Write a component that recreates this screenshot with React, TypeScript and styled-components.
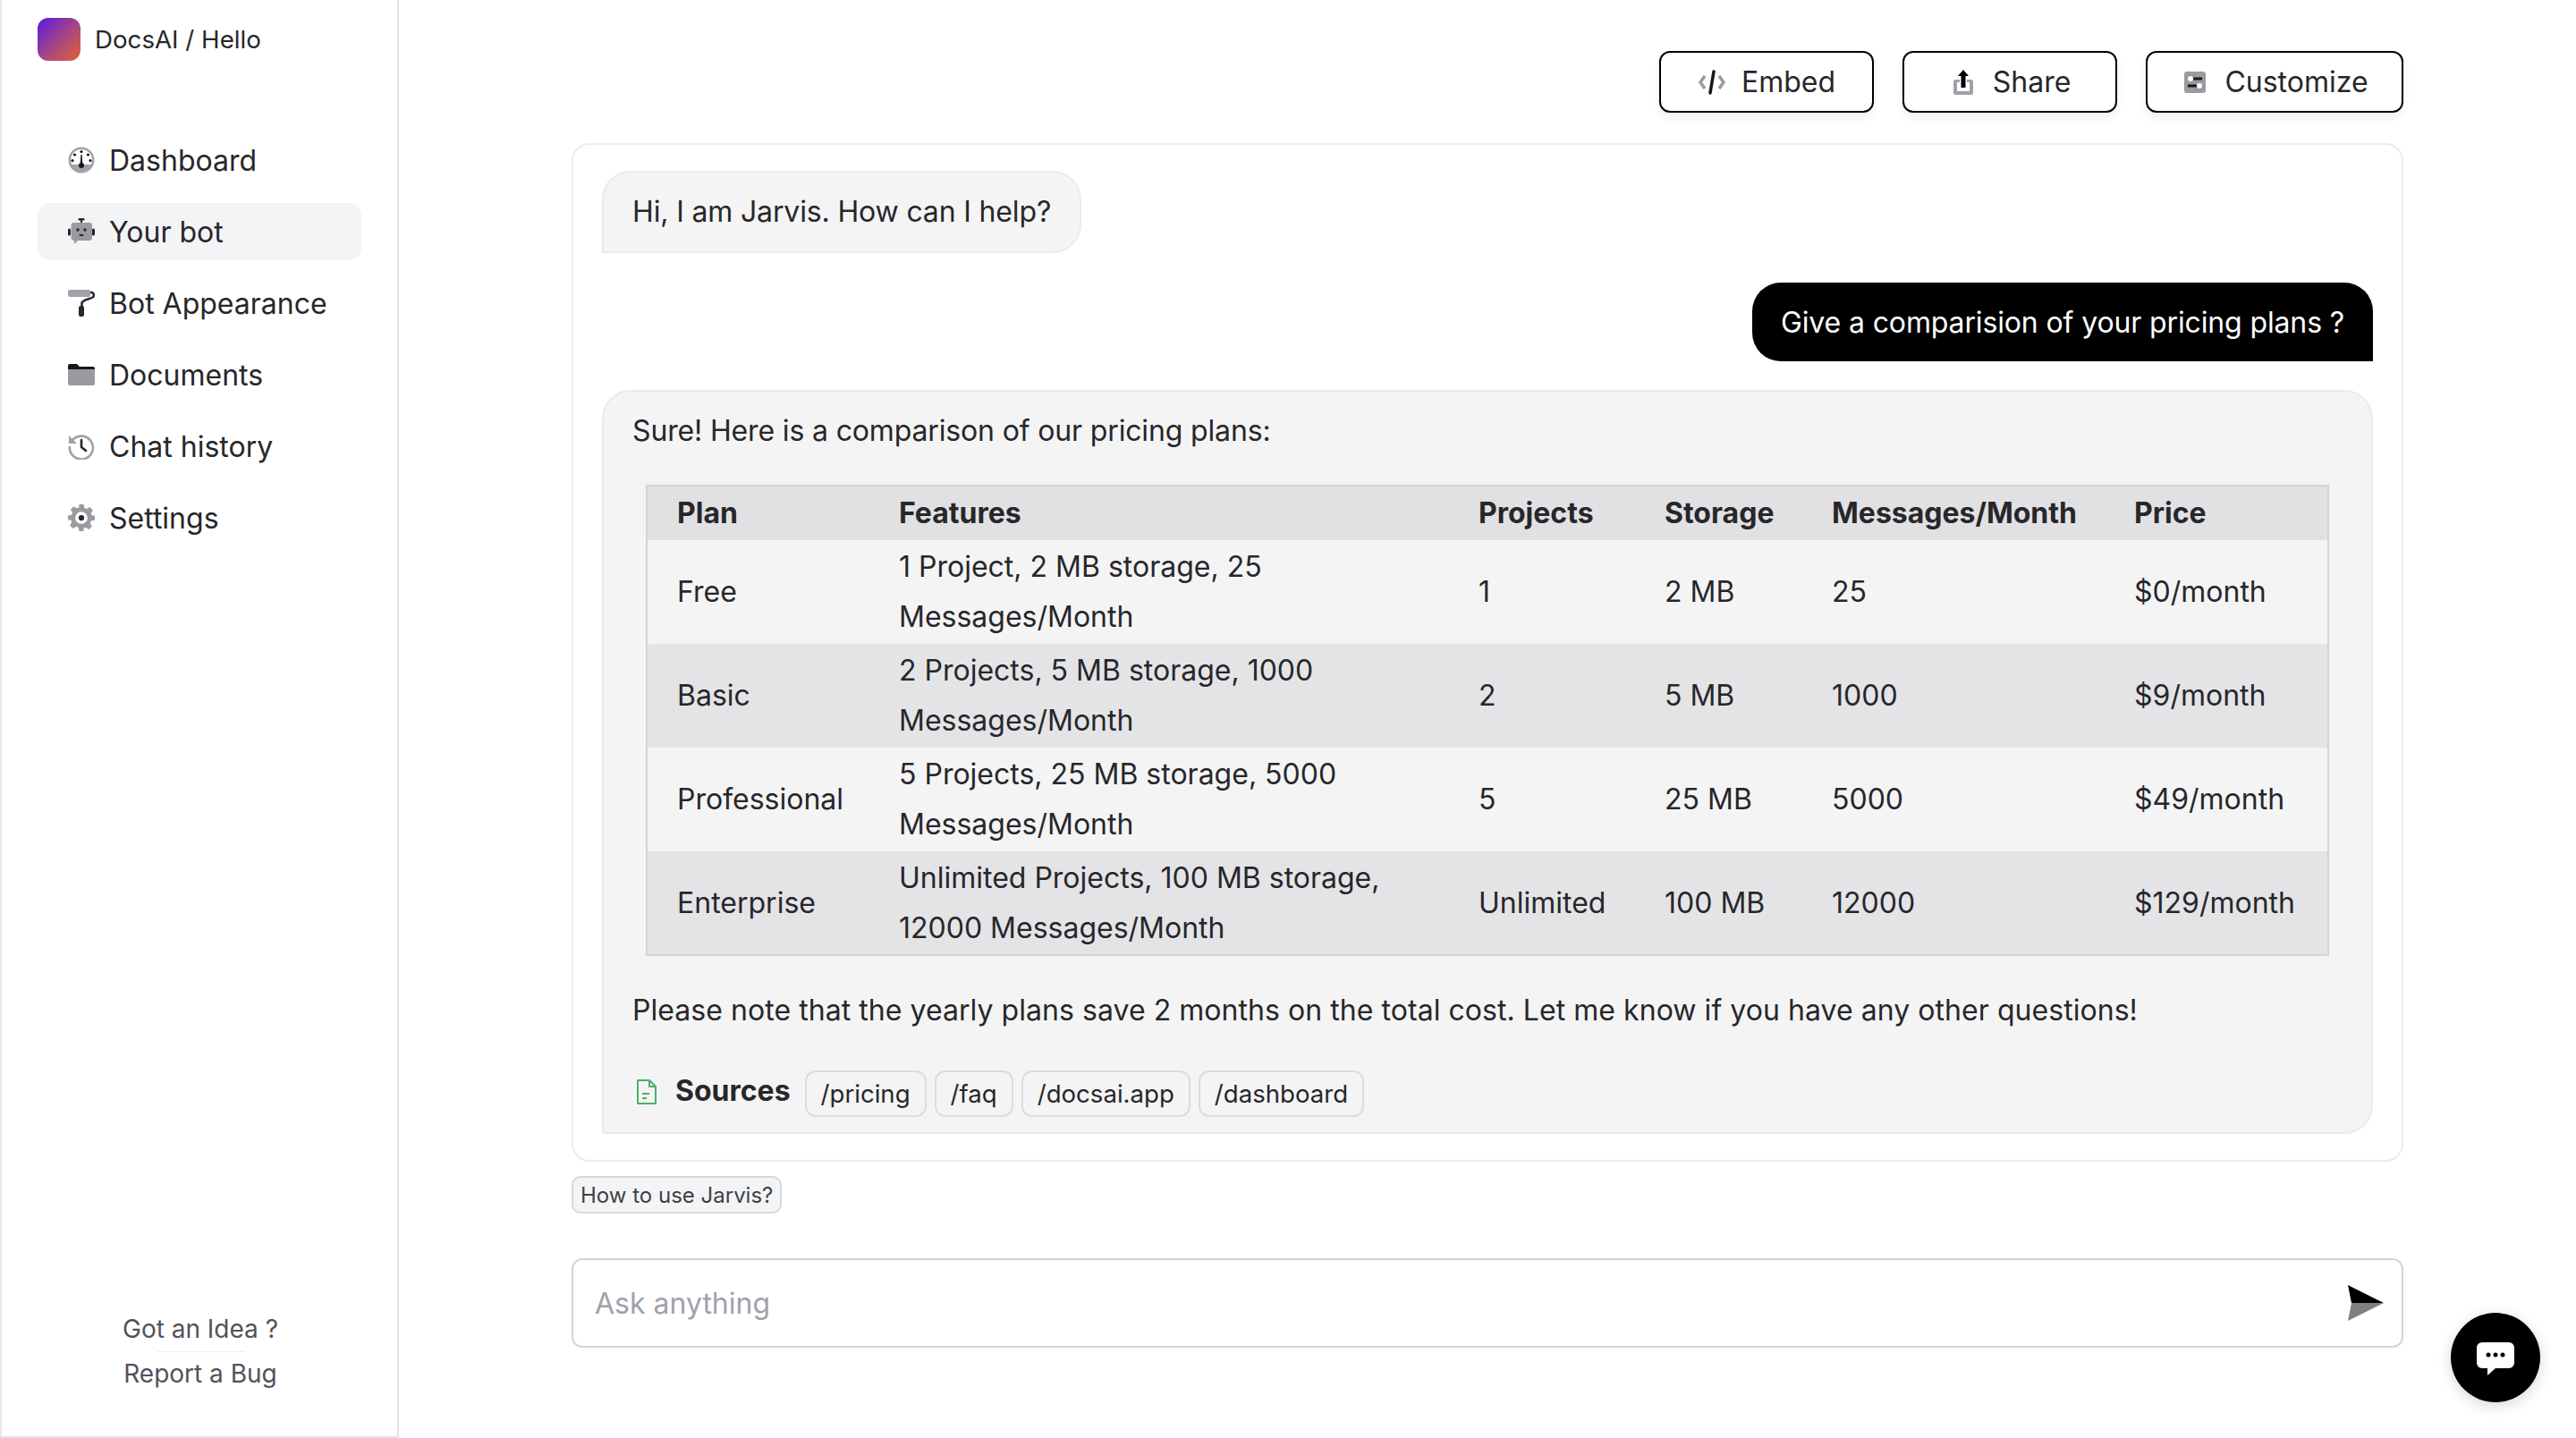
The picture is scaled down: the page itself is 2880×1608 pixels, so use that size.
// App.tsx
import React from 'react';
import styled, { createGlobalStyle } from 'styled-components';

const GlobalStyle = createGlobalStyle`
    html, body {
        margin: 0;
        padding: 0;
        background: #fff;
    }
    body {
        font-family: Inter, 'Liberation Sans', sans-serif;
        color: #27272a;
    }
    * {
        box-sizing: border-box;
    }
`;

const Page = styled.div`
    display: flex;
    width: 2880px;
    height: 1608px;
    position: relative;
    overflow: hidden;
`;

const Sidebar = styled.aside`
    width: 446px;
    height: 1608px;
    flex-shrink: 0;
    display: flex;
    flex-direction: column;
    border-left: 2px solid #e9e9ea;
    border-right: 2px solid #e4e4e7;
    border-bottom: 2px solid #e4e4e7;
    padding: 20px 40px 0;
`;

const Brand = styled.div`
    display: flex;
    align-items: center;
    gap: 16px;
    height: 48px;
    font-size: 27.7px;
    color: #27272a;
`;

const Logo = styled.div`
    width: 48px;
    height: 48px;
    border-radius: 12px;
    background: linear-gradient(135deg, #5a18e6 0%, #a9487f 55%, #e65f33 100%);
`;

const Nav = styled.nav`
    display: flex;
    flex-direction: column;
    gap: 16px;
    margin-top: 79px;
    width: 362px;
`;

const NavItem = styled.div<{ $active?: boolean }>`
    display: flex;
    align-items: center;
    gap: 16px;
    height: 64px;
    padding-left: 34px;
    border-radius: 14px;
    font-size: 32px;
    color: #27272a;
    background: ${(p) => (p.$active ? '#f3f4f6' : 'transparent')};
`;

const NavIcon = styled.svg`
    width: 30px;
    height: 30px;
    flex-shrink: 0;
`;

const SideFooter = styled.div`
    margin-top: auto;
    margin-bottom: 50px;
    display: flex;
    flex-direction: column;
    align-items: center;
    color: #52525b;
    font-size: 28px;
    line-height: 40px;
    width: 362px;
    padding-left: 2px;
`;

const FooterRule = styled.div`
    width: 98px;
    height: 1px;
    margin: 5px 0 4px;
    background: #eeeeef;
`;

const Main = styled.main`
    flex: 1;
    padding: 57px 193px 0 193px;
    display: flex;
    flex-direction: column;
`;

const Toolbar = styled.div`
    display: flex;
    justify-content: flex-end;
    gap: 32px;
    height: 69px;
    flex-shrink: 0;
`;

const ToolButton = styled.button<{ $width: number }>`
    width: ${(p) => p.$width}px;
    height: 69px;
    display: flex;
    align-items: center;
    justify-content: center;
    gap: 17px;
    background: #fff;
    border: 2px solid #000;
    border-radius: 12px;
    box-shadow: 0 6px 10px rgba(0, 0, 0, 0.06);
    font-family: inherit;
    font-size: 32px;
    color: #27272a;
    padding: 0;
`;

const ToolIcon = styled.svg`
    width: 32px;
    height: 32px;
`;

const ChatCard = styled.section`
    margin-top: 34px;
    height: 1139px;
    flex-shrink: 0;
    border: 2px solid #ececed;
    border-radius: 20px;
    padding: 29px 32px;
    display: flex;
    flex-direction: column;
`;

const BotBubble = styled.div`
    align-self: flex-start;
    flex-shrink: 0;
    background: #f4f4f5;
    border: 2px solid #ebebec;
    border-radius: 32px 32px 32px 0;
    padding: 16px 32px;
    font-size: 32px;
    line-height: 56px;
    letter-spacing: -0.15px;
    color: #27272a;
`;

const UserBubble = styled.div`
    align-self: flex-end;
    flex-shrink: 0;
    margin-top: 33px;
    height: 88px;
    display: flex;
    align-items: center;
    background: #000;
    color: #fff;
    border-radius: 32px 32px 0 32px;
    padding: 0 32px;
    font-size: 32px;
    letter-spacing: -0.13px;
`;

const AnswerBubble = styled(BotBubble)`
    align-self: stretch;
    margin-top: 32px;
    height: 832px;
    padding: 16px 32px 0;
    letter-spacing: 0;
`;

const Paragraph = styled.p<{ $spacing: number }>`
    margin: 0;
    letter-spacing: ${(p) => p.$spacing}px;
`;

const PriceTable = styled.table`
    width: 1880px;
    table-layout: fixed;
    border-collapse: collapse;
    margin: 32px 0 33px 15px;
    border: 2px solid #d4d4d8;
    font-size: 32px;
    line-height: 56px;
`;

const Col = styled.col<{ $width: number }>`
    width: ${(p) => p.$width}px;
`;

const HeadCell = styled.th`
    text-align: left;
    font-weight: 700;
    background: #e1e1e4;
    height: 61px;
    padding: 0 0 0 32px;
    line-height: 40px;

    &:first-child {
        padding-left: 33px;
    }
`;

const BodyRow = styled.tr<{ $shaded: boolean }>`
    background: ${(p) => (p.$shaded ? '#e4e4e7' : '#f4f4f5')};
`;

const BodyCell = styled.td`
    padding: 0 0 0 32px;
    height: 116px;

    &:first-child {
        padding-left: 33px;
    }
`;

const SourcesRow = styled.div`
    display: flex;
    align-items: center;
    margin-top: 39px;
    height: 52px;
`;

const SourcesIcon = styled.svg`
    width: 26px;
    height: 30px;
    margin-left: 3px;
    margin-right: 19px;
    margin-top: -4px;
`;

const SourcesLabel = styled.span`
    font-weight: 700;
    font-size: 32px;
    margin-right: 16px;
    margin-top: -6px;
`;

const SourceChips = styled.div`
    display: flex;
    gap: 9px;
`;

const SourceChip = styled.span`
    height: 52px;
    display: flex;
    align-items: center;
    padding: 0 16px;
    border: 2px solid #dcdcde;
    border-radius: 12px;
    font-size: 27.6px;
    color: #27272a;
`;

const Suggestion = styled.div`
    align-self: flex-start;
    margin-top: 16px;
    height: 42px;
    display: flex;
    align-items: center;
    padding: 0 8px;
    background: #f3f4f6;
    border: 2px solid #d8d8db;
    border-radius: 10px;
    font-size: 24px;
    color: #3f3f46;
`;

const InputBox = styled.div`
    margin-top: 50px;
    height: 100px;
    border: 2px solid #d4d4d8;
    border-radius: 12px;
    display: flex;
    align-items: center;
    justify-content: space-between;
    padding: 0 19px 0 24px;
    font-size: 32px;
    color: #a1a1aa;
`;

const SendIcon = styled.svg`
    width: 42px;
    height: 42px;
`;

const ChatFab = styled.div`
    position: absolute;
    left: 2740px;
    top: 1468px;
    width: 100px;
    height: 100px;
    border-radius: 50%;
    background: #000;
    box-shadow: 0 4px 16px rgba(0, 0, 0, 0.16);
    display: flex;
    align-items: center;
    justify-content: center;
`;

const FabIcon = styled.svg`
    width: 44px;
    height: 44px;
    margin-top: 6px;
`;

const DashboardIcon = () => (
    <NavIcon viewBox="0 0 30 30">
        <circle cx="15" cy="15" r="14.500" fill="#a1a1aa" />
        <path d="M3 15a12 12 0 0 1 24 0c0 2-.5 3.5-1.500 5h-21C3.500 18.500 3 17 3 15z" fill="#fff" />
        <path d="M13.600 21 14.400 9h1.200l.8 12z" fill="#18181b" />
        <circle cx="15" cy="21" r="3" fill="#18181b" />
        <circle cx="15" cy="5.500" r="1.600" fill="#18181b" />
        <circle cx="7.500" cy="9" r="1.600" fill="#18181b" />
        <circle cx="22.500" cy="9" r="1.600" fill="#18181b" />
        <circle cx="5" cy="15.500" r="1.600" fill="#18181b" />
        <circle cx="25" cy="15.500" r="1.600" fill="#18181b" />
    </NavIcon>
);

const BotIcon = () => (
    <NavIcon viewBox="0 0 30 30">
        <path d="M3.500 8a3 3 0 0 1 3-3h17.500a3 3 0 0 1 3 3v14a3 3 0 0 1-3 3H11l-4 4v-4a3.500 3.500 0 0 1-3.500-3z" fill="#9a9aa0" />
        <rect x="0" y="11.500" width="3" height="8" rx="1.500" fill="#27272a" />
        <rect x="27" y="11.500" width="3" height="8" rx="1.500" fill="#27272a" />
        <rect x="14" y="1" width="2" height="4" fill="#27272a" />
        <rect x="11.500" y="0" width="7" height="2.500" rx="1.200" fill="#27272a" />
        <circle cx="11" cy="13" r="1.700" fill="#27272a" />
        <circle cx="19" cy="13" r="1.700" fill="#27272a" />
        <rect x="12.500" y="18" width="5" height="2" rx="1" fill="#27272a" />
    </NavIcon>
);

const RollerIcon = () => (
    <NavIcon viewBox="0 0 30 30">
        <rect x="0" y="0" width="25" height="8" rx="2" fill="#a1a1aa" />
        <path d="M25 3h1a3 3 0 0 1 2.500 4.500C27 10.500 18 10 15.500 14.500V19" fill="none" stroke="#27272a" strokeWidth="2.500" />
        <rect x="12" y="18" width="6" height="12" rx="2" fill="#27272a" />
    </NavIcon>
);

const FolderIcon = () => (
    <NavIcon viewBox="0 0 30 30">
        <path d="M0 5a2 2 0 0 1 2-2h8l3 3h15a2 2 0 0 1 2 2v1H0z" fill="#18181b" />
        <path d="M0 9h30v16a2 2 0 0 1-2 2H2a2 2 0 0 1-2-2z" fill="#9a9aa0" />
    </NavIcon>
);

const HistoryIcon = () => (
    <NavIcon viewBox="0 0 30 30">
        <path d="M4 9.500A13 13 0 1 1 2 15" fill="none" stroke="#a1a1aa" strokeWidth="2.600" />
        <path d="M1 3v9h9z" fill="#a1a1aa" />
        <path d="M15 8v8l5 4" fill="none" stroke="#27272a" strokeWidth="2.600" strokeLinecap="round" />
    </NavIcon>
);

const GearIcon = () => (
    <NavIcon viewBox="0 0 24 24">
        <path
            d="M10 0h4l.7 3.200 2 .8 2.800-1.700 2.800 2.800-1.700 2.800.8 2L24 10v4l-3.400.7-.8 2 1.700 2.800-2.800 2.800-2.800-1.700-2 .8L14 24h-4l-.7-3.400-2-.8-2.800 1.700-2.800-2.800 1.700-2.800-.8-2L0 14v-4l3.200-.7.8-2-1.700-2.800 2.800-2.800 2.800 1.700 2-.8z"
            fill="#9a9aa0"
        />
        <circle cx="12" cy="12" r="5.500" fill="#fff" />
        <circle cx="12" cy="12" r="2.500" fill="#27272a" />
    </NavIcon>
);

const navItems = [
    { label: 'Dashboard', icon: <DashboardIcon /> },
    { label: 'Your bot', icon: <BotIcon />, active: true },
    { label: 'Bot Appearance', icon: <RollerIcon /> },
    { label: 'Documents', icon: <FolderIcon /> },
    { label: 'Chat history', icon: <HistoryIcon /> },
    { label: 'Settings', icon: <GearIcon /> },
];

const columns = [
    { title: 'Plan', width: 250 },
    { title: 'Features', width: 648 },
    { title: 'Projects', width: 208 },
    { title: 'Storage', width: 187 },
    { title: 'Messages/Month', width: 338 },
    { title: 'Price', width: 249 },
];

const plans = [
    ['Free', '1 Project, 2 MB storage, 25 Messages/Month', '1', '2 MB', '25', '$0/month'],
    ['Basic', '2 Projects, 5 MB storage, 1000 Messages/Month', '2', '5 MB', '1000', '$9/month'],
    ['Professional', '5 Projects, 25 MB storage, 5000 Messages/Month', '5', '25 MB', '5000', '$49/month'],
    ['Enterprise', 'Unlimited Projects, 100 MB storage, 12000 Messages/Month', 'Unlimited', '100 MB', '12000', '$129/month'],
];

const sources = ['/pricing', '/faq', '/docsai.app', '/dashboard'];

const App: React.FC = () => {
    return (
        <Page>
            <GlobalStyle />
            <Sidebar>
                <Brand>
                    <Logo />
                    <span>DocsAI / Hello</span>
                </Brand>
                <Nav>
                    {navItems.map((item) => (
                        <NavItem key={item.label} $active={item.active}>
                            {item.icon}
                            {item.label}
                        </NavItem>
                    ))}
                </Nav>
                <SideFooter>
                    <span>Got an Idea ?</span>
                    <FooterRule />
                    <span>Report a Bug</span>
                </SideFooter>
            </Sidebar>
            <Main>
                <Toolbar>
                    <ToolButton $width={240}>
                        <ToolIcon viewBox="0 0 32 32">
                            <path d="M8 9 3 16l5 7M24 9l5 7-5 7" fill="none" stroke="#9a9aa0" strokeWidth="3.500" />
                            <path d="M18 4 14 28" fill="none" stroke="#18181b" strokeWidth="3.500" strokeLinecap="round" />
                        </ToolIcon>
                        Embed
                    </ToolButton>
                    <ToolButton $width={240}>
                        <ToolIcon viewBox="0 0 32 32">
                            <path d="M7 13h5v3H9v10h14V16h-3v-3h5a2 2 0 0 1 2 2v13a2 2 0 0 1-2 2H7a2 2 0 0 1-2-2V15a2 2 0 0 1 2-2z" fill="#a1a1aa" />
                            <path d="M16 2l6 7h-3.500v13h-5V9H10z" fill="#000" />
                        </ToolIcon>
                        Share
                    </ToolButton>
                    <ToolButton $width={288}>
                        <ToolIcon viewBox="0 0 32 32">
                            <rect x="4" y="4" width="24" height="24" rx="3" fill="#9a9aa0" />
                            <path d="M14 12h10M8 20h10" stroke="#18181b" strokeWidth="3" />
                            <circle cx="11" cy="12" r="3" fill="#fff" />
                            <circle cx="21" cy="20" r="3" fill="#fff" />
                        </ToolIcon>
                        Customize
                    </ToolButton>
                </Toolbar>
                <ChatCard>
                    <BotBubble>Hi, I am Jarvis. How can I help?</BotBubble>
                    <UserBubble>Give a comparision of your pricing plans ?</UserBubble>
                    <AnswerBubble>
                        <Paragraph $spacing={-0.15}>Sure! Here is a comparison of our pricing plans:</Paragraph>
                        <PriceTable>
                            <colgroup>
                                {columns.map((col) => (
                                    <Col key={col.title} $width={col.width} />
                                ))}
                            </colgroup>
                            <thead>
                                <tr>
                                    {columns.map((col) => (
                                        <HeadCell key={col.title}>{col.title}</HeadCell>
                                    ))}
                                </tr>
                            </thead>
                            <tbody>
                                {plans.map((plan, index) => (
                                    <BodyRow key={plan[0]} $shaded={index % 2 === 1}>
                                        {plan.map((cell) => (
                                            <BodyCell key={cell}>{cell}</BodyCell>
                                        ))}
                                    </BodyRow>
                                ))}
                            </tbody>
                        </PriceTable>
                        <Paragraph $spacing={0.05}>
                            Please note that the yearly plans save 2 months on the total cost. Let me know if you have any other questions!
                        </Paragraph>
                        <SourcesRow>
                            <SourcesIcon viewBox="0 0 26 30">
                                <path
                                    d="M3 2h13l7 7v19H3z M16 2v7h7 M8 17h8 M8 22h5"
                                    fill="none"
                                    stroke="#4caf6a"
                                    strokeWidth="2"
                                    strokeLinejoin="round"
                                />
                            </SourcesIcon>
                            <SourcesLabel>Sources</SourcesLabel>
                            <SourceChips>
                                {sources.map((source) => (
                                    <SourceChip key={source}>{source}</SourceChip>
                                ))}
                            </SourceChips>
                        </SourcesRow>
                    </AnswerBubble>
                </ChatCard>
                <Suggestion>How to use Jarvis?</Suggestion>
                <InputBox>
                    <span>Ask anything</span>
                    <SendIcon viewBox="0 0 42 42">
                        <path d="M1 1 41 21H5z" fill="#000" />
                        <path d="M5 21H41L1 41z" fill="#808080" />
                    </SendIcon>
                </InputBox>
            </Main>
            <ChatFab>
                <FabIcon viewBox="0 0 44 44">
                    <path
                        d="M7 2h30a6 6 0 0 1 6 6v17a6 6 0 0 1-6 6H22l-9 8v-8H7a6 6 0 0 1-6-6V8a6 6 0 0 1 6-6z"
                        fill="#fff"
                    />
                    <circle cx="14" cy="16" r="2.500" fill="#000" />
                    <circle cx="22" cy="16" r="2.500" fill="#000" />
                    <circle cx="30" cy="16" r="2.500" fill="#000" />
                </FabIcon>
            </ChatFab>
        </Page>
    );
};

export default App;
